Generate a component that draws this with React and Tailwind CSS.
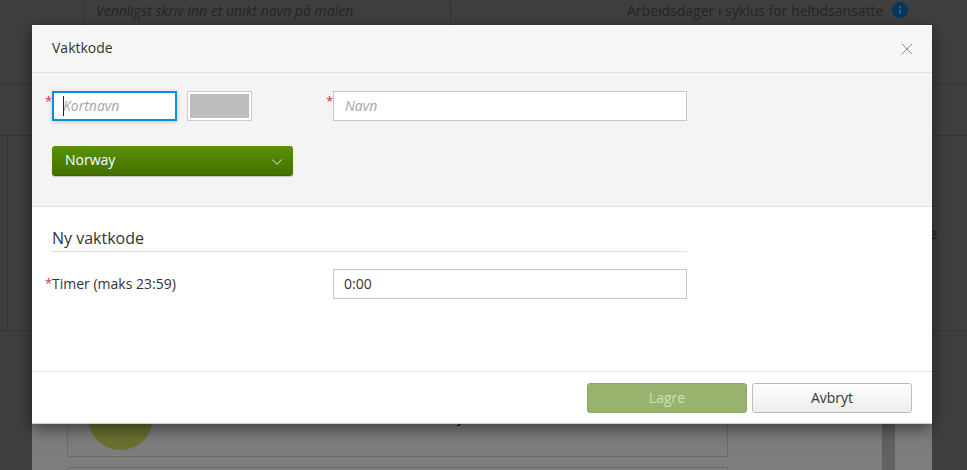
import { ChevronDown, X } from 'lucide-react';

function Required() {
  return <span className="absolute left-[-7px] top-[1px] text-[13px] text-[#cf2e3a]">*</span>;
}

// the page behind the dialog, dimmed by the backdrop
function PageBehind() {
  return (
    <div className="h-[470px] bg-[#3f3f3f] text-[#262626]">
      <div className="h-[85px] border-b border-[#353535]">
        <div className="flex h-[25px]">
          <div className="w-[85px] border-r border-[#353535]" />
          <div className="w-[366px] border-r border-[#353535] pl-[11px] text-[14px] leading-[22px] italic">
            Vennligst skriv inn et unikt navn på malen
          </div>
          <div className="flex flex-1 items-start pl-[176px]">
            <span className="text-[14px] leading-[22px]">Arbeidsdager i syklus for heltidsansatte</span>
            <svg width="16" height="16" viewBox="0 0 16 16" className="ml-[9px] mt-[2px]">
              <circle cx="8" cy="8" r="8" fill="#06365c" />
              <rect x="7" y="7" width="2" height="5" fill="#1f5f8f" />
              <rect x="7" y="4" width="2" height="2" fill="#1f5f8f" />
            </svg>
          </div>
        </div>
      </div>
      <div className="h-[51px] border-b border-[#353535]" />
      <div className="flex h-[195px] border-b border-[#353535]">
        <div className="w-[8px] border-r border-[#353535]" />
        <div className="flex-1 pr-[30px] pt-[87px] text-right text-[14px] leading-[22px] text-[#14202c]">e</div>
      </div>
    </div>
  );
}

function Dialog() {
  return (
    <div className="relative z-10 w-[900px] bg-white text-[14px] text-[#333] shadow-[0_5px_15px_rgba(0,0,0,0.5)]">
      <div className="flex h-[48px] items-center justify-between border-b border-[#e2e2e2] bg-[#f7f7f7] pl-[20px] pr-[15px]">
        <span className="mb-[2px] text-[14px]">Vaktkode</span>
        <X size={20} strokeWidth={1.2} className="mt-[1px] text-[#8f8f8f]" />
      </div>

      <div className="h-[134px] border-b border-[#e2e2e2] bg-[#f4f4f4] pl-[20px] pt-[18px]">
        <div className="flex">
          <div className="relative h-[30px] w-[125px]">
            <Required />
            <input
              readOnly
              placeholder="Kortnavn"
              className="h-full w-full border-2 border-[#0b8ede] bg-white pb-[2px] pl-[9px] text-[14px] italic shadow-[0_1px_4px_rgba(0,0,0,0.2)] outline-none placeholder:text-[#a6a6a6]"
            />
            <span className="absolute left-[11px] top-[5px] h-[20px] w-px bg-[#222]" />
          </div>
          <div className="ml-[10px] h-[30px] w-[65px] border border-[#cccccc] bg-white p-[2px]">
            <div className="h-full bg-[#bdbdbd]" />
          </div>
          <div className="relative ml-[81px] h-[30px] w-[354px]">
            <Required />
            <input
              readOnly
              placeholder="Navn"
              className="h-full w-full border border-[#c8c8c8] bg-white pb-[2px] pl-[11px] text-[14px] italic outline-none placeholder:text-[#a6a6a6]"
            />
          </div>
        </div>
        <button className="mt-[25px] flex h-[30px] w-[241px] items-center justify-between rounded-[3px] border-b border-[#3d6400] bg-gradient-to-b from-[#589200] to-[#457000] pl-[13px] pr-[7px] text-[14px] font-medium text-white shadow-[0_1px_1px_rgba(0,0,0,0.2)]">
          <span className="mb-[2px]">Norway</span>
          <ChevronDown size={18} strokeWidth={1.3} className="mt-[3px] text-[#eef4e4]" />
        </button>
      </div>

      <div className="h-[164px] pl-[20px] pt-[20px]">
        <div className="w-[635px] border-b border-[#dddddd] pb-[2px] text-[16px] leading-[22px]">Ny vaktkode</div>
        <div className="mt-[17px] flex h-[30px] items-center">
          <div className="relative mb-[2px] w-[281px]">
            <span className="absolute left-[-7px] top-[1px] text-[13px] text-[#cf2e3a]">*</span>
            Timer (maks 23:59)
          </div>
          <input
            readOnly
            value="0:00"
            className="h-full w-[354px] border border-[#c8c8c8] bg-white pb-[2px] pl-[10px] text-[14px] text-[#333] outline-none"
          />
        </div>
      </div>

      <div className="flex h-[53px] justify-end gap-[5px] border-y border-t-[#e2e2e2] border-b-[#cfcfcf] pr-[20px] pt-[11px]">
        <button className="h-[30px] w-[160px] rounded-[3px] border border-[#8aa860] bg-[#98b36d] pb-[2px] text-[14px] text-[#cfe3b2]">
          Lagre
        </button>
        <button className="h-[30px] w-[160px] rounded-[3px] border border-[#bbbbbb] bg-gradient-to-b from-white to-[#ececec] pb-[2px] text-[14px] text-[#333]">
          Avbryt
        </button>
      </div>
    </div>
  );
}

export default function App() {
  return (
    <div className="relative h-[470px] overflow-hidden font-['Open_Sans',sans-serif]">
      <PageBehind />
      <div className="absolute inset-0 flex flex-col pl-[32px] pt-[25px]">
        <Dialog />
        <div className="relative w-[900px] flex-1 bg-[#7d7d7d]">
          {/* cards under the dialog */}
          <div className="ml-[35px] h-[33px] w-[661px] border-x border-b border-[#6b6b6b]" />
          <div className="ml-[35px] mt-[10px] h-[10px] w-[661px] border-x border-t border-[#6b6b6b]" />
          <div className="absolute left-[56px] top-[-39px] h-[65px] w-[65px] rounded-full bg-[#6a702f]" />
          <span className="absolute left-[425px] top-[-17px] text-[14px] leading-[20px] text-black">y</span>
          <div className="absolute bottom-0 left-[850px] top-0 w-[13px] bg-[#616161]" />
        </div>
      </div>
    </div>
  );
}
